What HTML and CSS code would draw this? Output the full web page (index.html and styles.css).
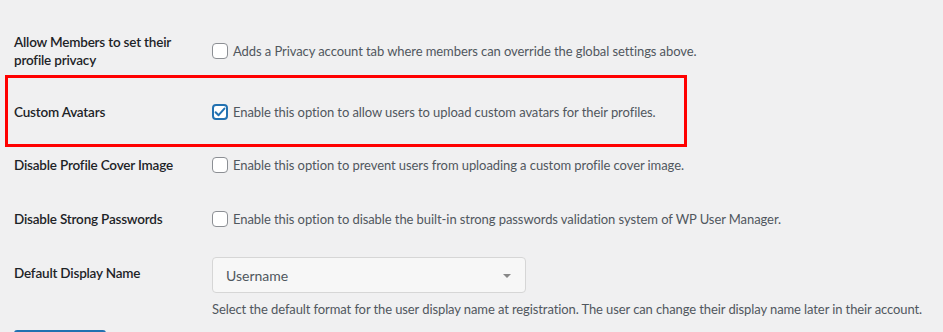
FILE: index.html
```html
<!DOCTYPE html>
<html>
<head>
<meta charset="utf-8">
<link rel="stylesheet" href="styles.css">
</head>
<body>
<div class="page">
  <div class="row row-1">
    <div class="label">Allow Members to set their profile privacy</div>
    <div class="control">
      <span class="cb"></span>
      <span class="desc">Adds a Privacy account tab where members can override the global settings above.</span>
    </div>
  </div>
  <div class="row row-2">
    <div class="label">Custom Avatars</div>
    <div class="control">
      <span class="cb checked"><svg viewBox="0 0 16 16" width="16" height="16"><path d="M3.6 8.2 L6.6 11.2 L12.4 4.6" fill="none" stroke="#2271b1" stroke-width="2" stroke-linecap="round" stroke-linejoin="round"/></svg></span>
      <span class="desc">Enable this option to allow users to upload custom avatars for their profiles.</span>
    </div>
  </div>
  <div class="row row-3">
    <div class="label">Disable Profile Cover Image</div>
    <div class="control">
      <span class="cb"></span>
      <span class="desc">Enable this option to prevent users from uploading a custom profile cover image.</span>
    </div>
  </div>
  <div class="row row-4">
    <div class="label">Disable Strong Passwords</div>
    <div class="control">
      <span class="cb"></span>
      <span class="desc">Enable this option to disable the built-in strong passwords validation system of WP User Manager.</span>
    </div>
  </div>
  <div class="row row-5">
    <div class="label label-top">Default Display Name</div>
    <div class="control-col">
      <div class="select">
        <span class="select-text">Username</span>
        <span class="arrow"></span>
      </div>
      <p class="help">Select the default format for the user display name at registration. The user can change their display name later in their account.</p>
    </div>
  </div>
  <div class="button"></div>
  <div class="highlight"></div>
</div>
</body>
</html>
```
FILE: styles.css
```css
html, body {
  margin: 0;
  padding: 0;
  background: #f0f0f1;
}
body {
  font-family: Lato, "Noto Sans", sans-serif;
  font-size: 14px;
  color: #1d2327;
  overflow: hidden;
  height: 332px;
}
.page {
  position: relative;
  padding: 20px 0 0 14px;
}
.row {
  display: flex;
  align-items: center;
}
.row-1 { height: 61px; }
.row-2 { height: 61px; }
.row-3 { height: 46px; }
.row-4 { height: 62px; }
.row-5 { align-items: flex-start; padding-top: 7px; }
.label {
  width: 198px;
  flex: none;
  font-weight: 600;
  font-size: 13.5px;
  letter-spacing: -0.2px;
  line-height: 18px;
  padding-right: 20px;
  box-sizing: border-box;
}
.label-top { padding-top: 7px; }
.control {
  display: flex;
  align-items: center;
  gap: 5px;
}
.cb {
  width: 16px;
  height: 16px;
  box-sizing: border-box;
  border: 1px solid #8c8f94;
  border-radius: 4px;
  background: #fff;
  flex: none;
  display: block;
}
.cb.checked {
  border: 2px solid #2271b1;
  position: relative;
}
.cb.checked svg {
  position: absolute;
  left: -2px;
  top: -2px;
}
.desc {
  color: #50575e;
  font-size: 13px;
  letter-spacing: -0.08px;
  line-height: 18px;
}
.control-col {
  display: flex;
  flex-direction: column;
}
.select {
  width: 314px;
  height: 36px;
  box-sizing: border-box;
  border: 1px solid #d6d6d6;
  border-radius: 4px;
  background: #f7f7f7;
  display: flex;
  align-items: center;
  justify-content: space-between;
  padding: 0 14px 0 13px;
}
.select-text {
  color: #50575e;
  font-size: 14px;
}
.arrow {
  width: 0;
  height: 0;
  border-left: 4px solid transparent;
  border-right: 4px solid transparent;
  border-top: 4px solid #888;
  margin-top: 1px;
}
.help {
  margin: 7px 0 0 0;
  color: #50575e;
  font-size: 13px;
  letter-spacing: -0.1px;
  line-height: 18px;
  white-space: nowrap;
}
.button {
  margin-top: 12px;
  width: 92px;
  height: 30px;
  background: #2271b1;
  border-radius: 3px;
}
.highlight {
  position: absolute;
  left: 5px;
  top: 75px;
  width: 682px;
  height: 72px;
  box-sizing: border-box;
  border: 3px solid #ff0000;
  pointer-events: none;
}
```
